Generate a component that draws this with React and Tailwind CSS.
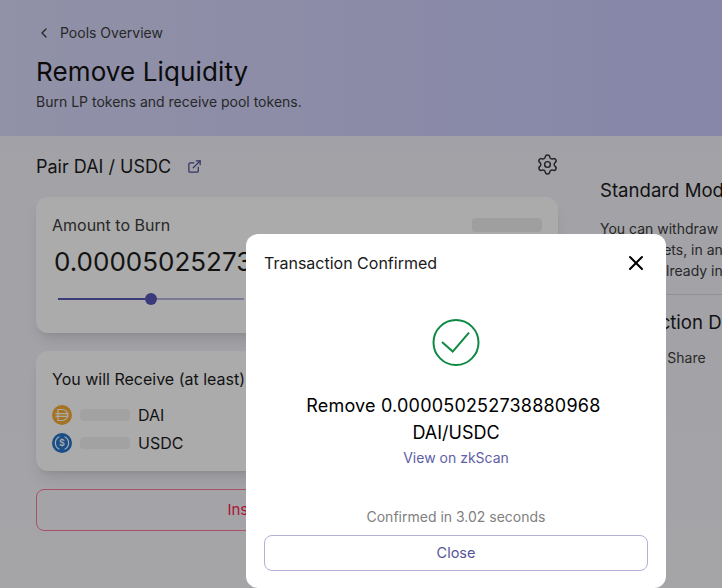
import React from 'react';
import { ChevronLeft, ExternalLink, Settings, X } from 'lucide-react';

const font = { fontFamily: 'Inter, sans-serif' };

const DaiIcon = () => (
  <svg width="20" height="20" viewBox="0 0 20 20" fill="none">
    <circle cx="10" cy="10" r="10" fill="#f5ac37" />
    <path d="M6 4.5h4.2a5.5 5.5 0 0 1 0 11H6z" stroke="#fff" strokeWidth="1.2" />
    <path d="M3.5 8.6h13M3.5 11.4h13" stroke="#fff" strokeWidth="1.2" />
  </svg>
);

const UsdcIcon = () => (
  <svg width="20" height="20" viewBox="0 0 20 20" fill="none">
    <circle cx="10" cy="10" r="10" fill="#2775ca" />
    <path d="M7.4 3.8a6.8 6.8 0 0 0 0 12.4M12.6 3.8a6.8 6.8 0 0 1 0 12.4" stroke="#fff" strokeWidth="1.2" />
    <text x="10" y="13.2" textAnchor="middle" fontSize="9" fontWeight="600" fill="#fff" fontFamily="Inter, sans-serif">$</text>
  </svg>
);

const TokenRow = ({ icon, name }) => (
  <div className="flex items-center h-5">
    {icon}
    <div className="w-[50px] h-3 rounded bg-[#f2f2f2] ml-2 mr-2" />
    <span className="text-base text-[#1c1c1c]">{name}</span>
  </div>
);

export default function App() {
  return (
    <div style={font} className="relative w-[722px] h-[588px] overflow-hidden bg-gradient-to-b from-[#f0f0f8] to-[#f6f6fb]">
      {/* Page header */}
      <div className="h-[136px] px-9 pt-[23px] bg-gradient-to-r from-[#d8d8fa] to-[#c8c8fc]">
        <div className="flex items-center h-5 text-sm text-[#3c3c3c]">
          <ChevronLeft size={16} className="mr-2" />
          <span>Pools Overview</span>
        </div>
        <h1 className="mt-[13px] text-[26px] leading-8 tracking-[0.12px] font-normal text-[#111]">Remove Liquidity</h1>
        <p className="mt-[6px] text-sm leading-4 text-[#3c3c3c]">Burn LP tokens and receive pool tokens.</p>
      </div>

      <div className="flex px-9 gap-[42px]">
        {/* Left column */}
        <div className="w-[522px] shrink-0">
          <div className="flex items-center justify-between h-[61px]">
            <div className="flex items-center">
              <span className="text-lg text-[#1c1c1c]">Pair DAI / USDC</span>
              <ExternalLink size={15} className="ml-4 text-[#4a4a9a]" />
            </div>
            <Settings size={23} strokeWidth={1.5} className="text-[#333] mb-[5px] -mr-[1px]" />
          </div>

          <div className="h-[136px] rounded-xl bg-white shadow-lg px-4 pt-4">
            <div className="flex justify-between items-center">
              <span className="text-base leading-6 text-[#3c3c3c]">Amount to Burn</span>
              <div className="w-[70px] h-[14px] rounded bg-[#eeeeee]" />
            </div>
            <div className="mt-[7px] ml-[2px] text-[26px] leading-9 text-[#1c1c1c] whitespace-nowrap">0.00005025273</div>
            <div className="mt-[13px] ml-[6px] w-[186px] flex items-center">
              <div className="w-[87px] h-[2px] bg-[#5858b8]" />
              <div className="w-3 h-3 rounded-full bg-[#5858b8]" />
              <div className="flex-1 h-[2px] bg-[#b6b6e0]" />
            </div>
          </div>

          <div className="mt-[18px] h-[120px] rounded-xl bg-white shadow-lg px-4 pt-4">
            <div className="text-base leading-6 text-[#1c1c1c]">You will Receive (at least)</div>
            <div className="mt-[14px] flex flex-col gap-2">
              <TokenRow icon={<DaiIcon />} name="DAI" />
              <TokenRow icon={<UsdcIcon />} name="USDC" />
            </div>
          </div>

          <button className="mt-[18px] w-full h-[42px] rounded-lg border border-[#ff7a98] text-[15px] text-[#ff2050]">
            Insufficient Balance
          </button>
        </div>

        {/* Right column */}
        <div className="w-[300px] shrink-0 pt-[42px] whitespace-nowrap">
          <h2 className="text-[18.6px] leading-6 text-[#1c1c1c]">Standard Mode</h2>
          <p className="mt-[16px] text-sm leading-[21px] text-[#3c3c3c]">
            You can withdraw
            <br />
            these assets, in an
            <br />
            that are{'\u00a0'} already in
          </p>
          <div className="mt-[13px] border-t border-[#d8d8d8]" />
          <h2 className="mt-[15px] text-[18.6px] leading-6 text-[#1c1c1c]">Transaction Details</h2>
          <p className="mt-[14px] text-sm leading-5 text-[#3c3c3c]">Your Pool Share</p>
        </div>
      </div>

      {/* Dim overlay */}
      <div className="absolute inset-0 bg-black/[.33]" />

      {/* Modal */}
      <div className="absolute left-[246px] top-[234px] w-[420px] h-[354px] rounded-xl bg-white px-[18px] flex flex-col">
        <div className="flex items-center justify-between h-[58px]">
          <span className="text-base text-[#1a1a1a]">Transaction Confirmed</span>
          <X size={24} strokeWidth={2} className="text-black" />
        </div>
        <div className="mt-[26px] flex justify-center">
          <svg width="48" height="48" viewBox="0 0 48 48" fill="none">
            <circle cx="24" cy="24.5" r="22.5" stroke="#0f8a45" strokeWidth="2" />
            <path d="M10 24l10.7 9.6L37 14.6" stroke="#0f8a45" strokeWidth="2" />
          </svg>
        </div>
        <div className="mt-[26px] text-center text-lg leading-[27px] text-black">
          <span className="tracking-[0.2px]">Remove 0.000050252738880968{'\u00a0'}</span>
          <br />
          DAI/USDC
        </div>
        <div className="mt-[2px] text-center text-sm leading-5 text-[#6060a8]">View on zkScan</div>
        <div className="mt-[39px] text-center text-sm leading-5 text-[#808080]">Confirmed in 3.02 seconds</div>
        <button className="mt-[8px] h-9 w-full rounded-lg border border-[#b0b0d8] text-[14.5px] text-[#55559a]">
          Close
        </button>
      </div>
    </div>
  );
}
